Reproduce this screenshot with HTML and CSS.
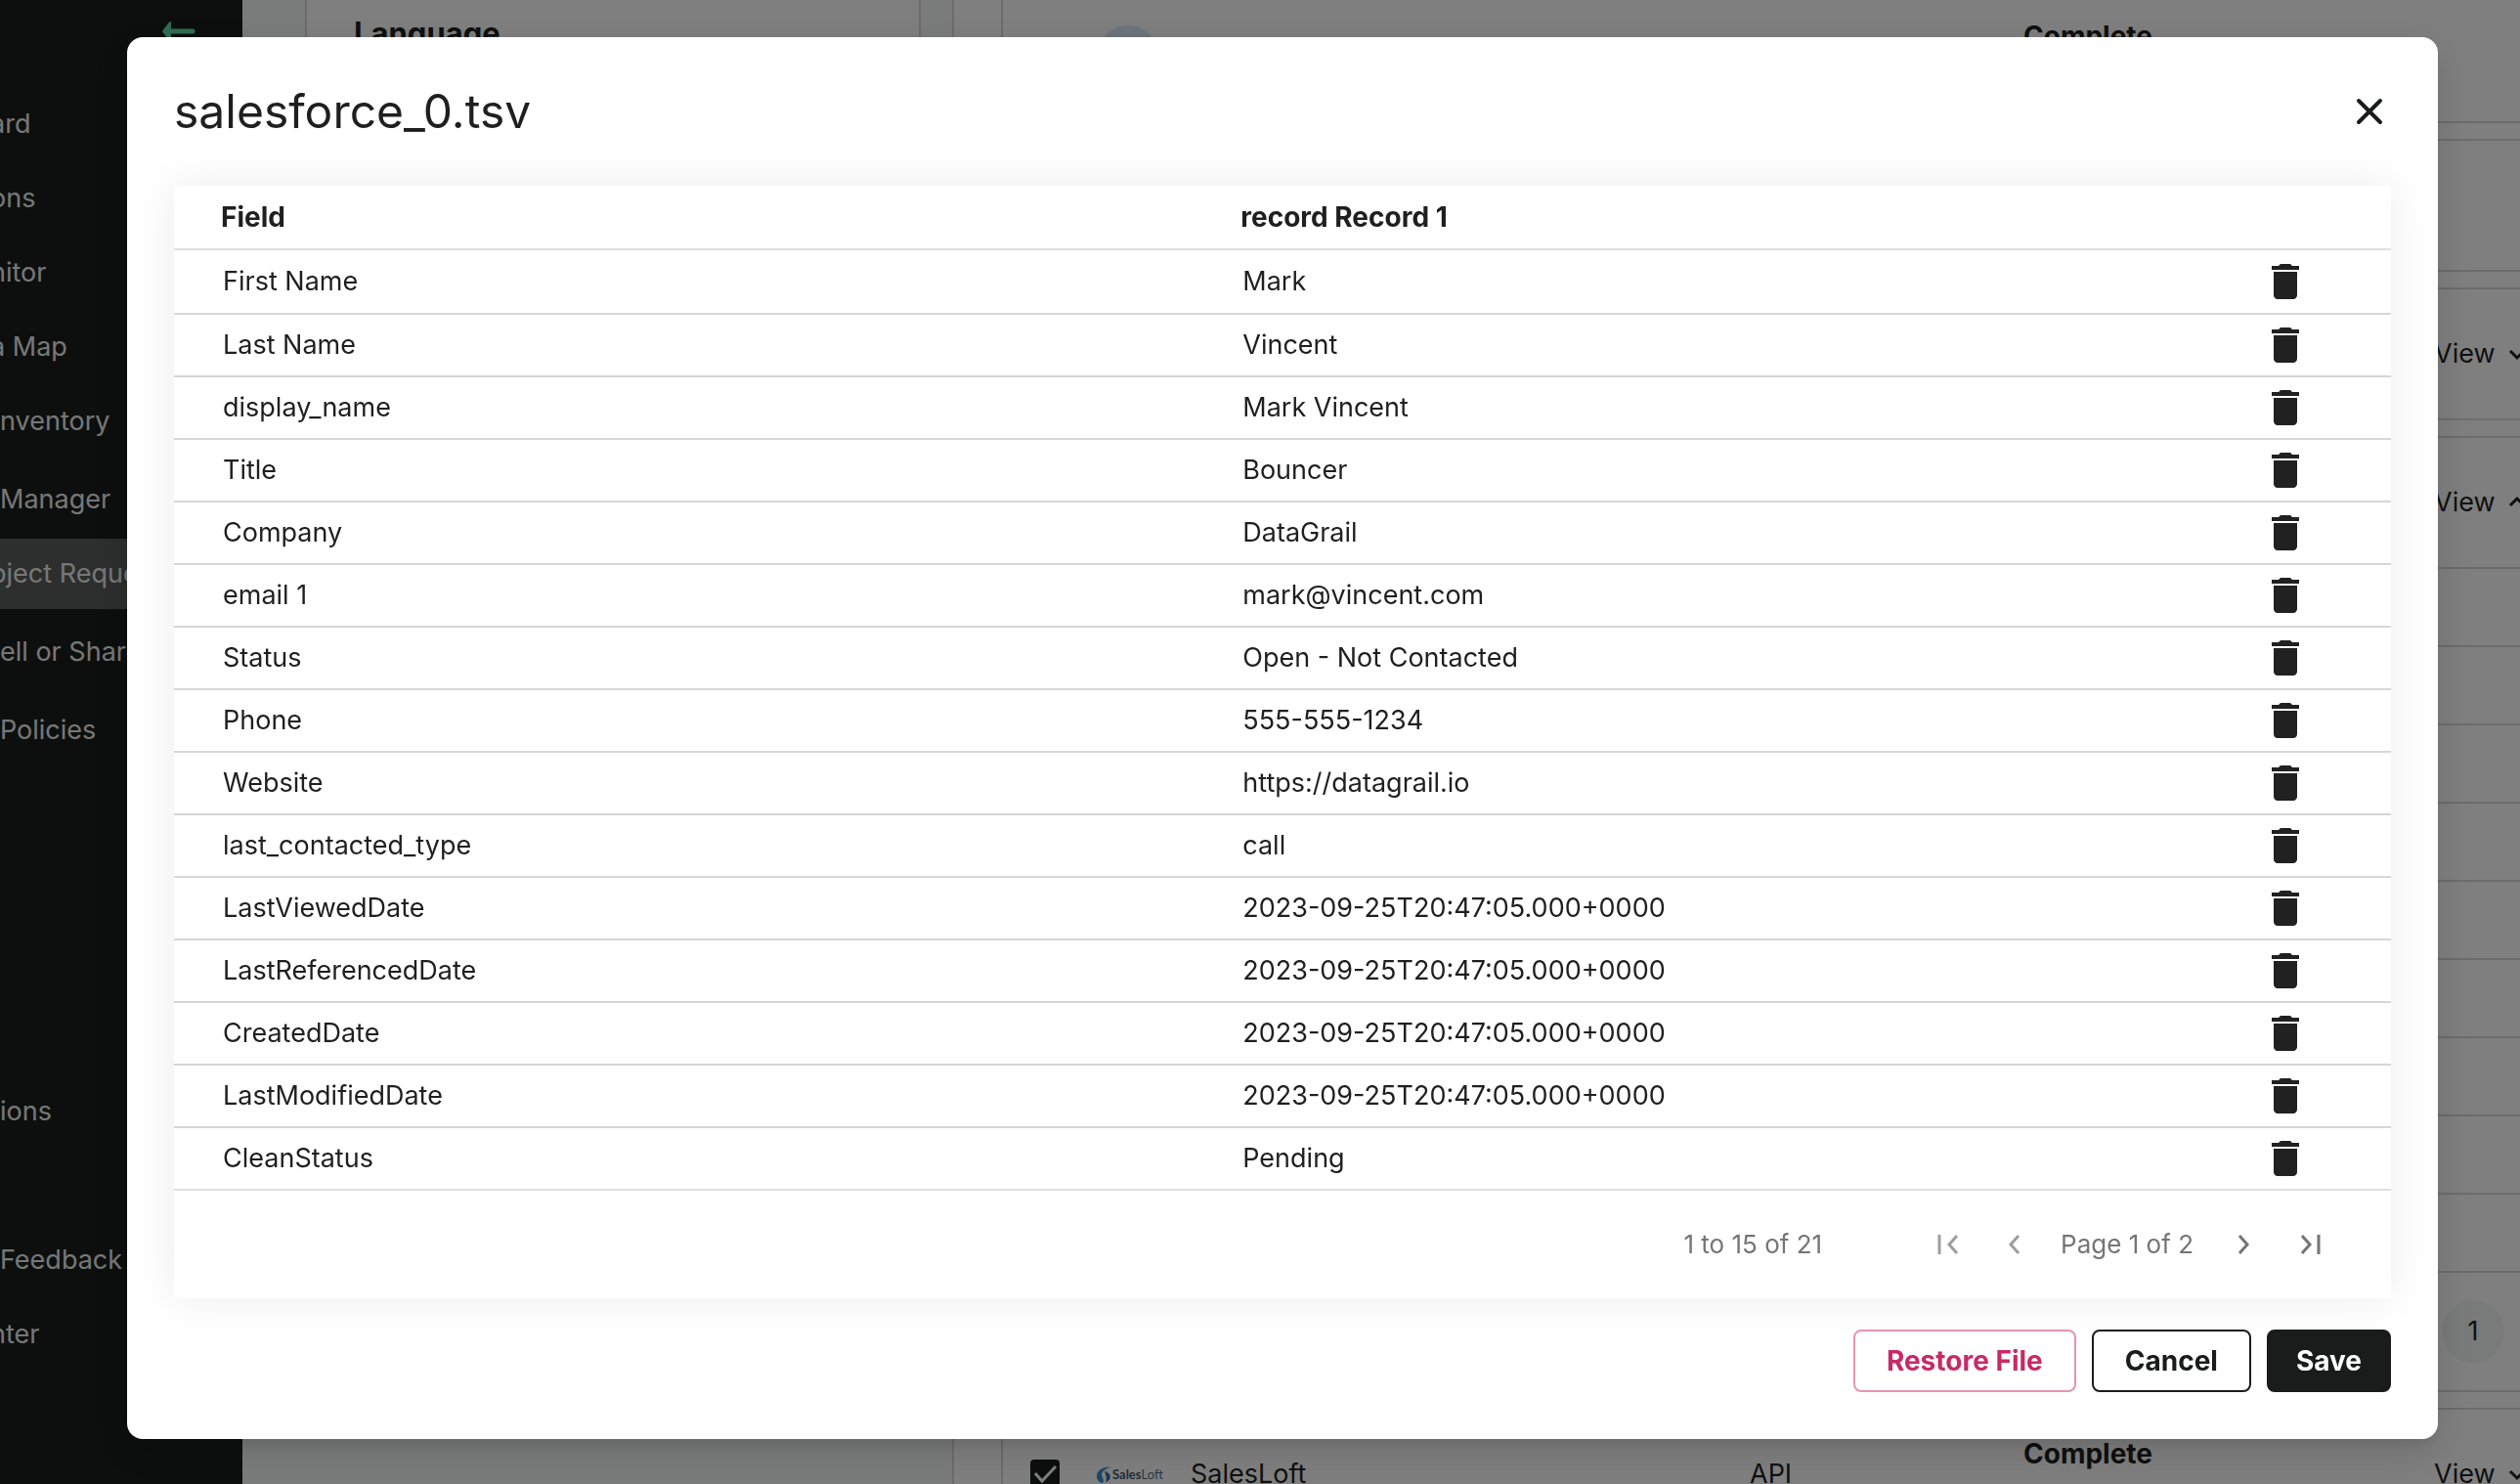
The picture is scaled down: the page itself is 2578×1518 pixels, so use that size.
FILE: index.html
```html
<!DOCTYPE html>
<html lang="en">
<head>
<meta charset="utf-8">
<title>salesforce_0.tsv</title>
<link rel="stylesheet" href="styles.css">
</head>
<body>
<div class="app">
  <nav class="sidebar" aria-label="Main">
    <button class="collapse" type="button" aria-label="Collapse menu">
      <svg width="36" height="24" viewBox="0 0 36 24"><path d="M10 3 3 12l7 9z" fill="currentColor" stroke="currentColor" stroke-width="2" stroke-linejoin="round"/><path d="M8 12h25" stroke="currentColor" stroke-width="5" stroke-linecap="round"/></svg>
    </button>
    <ul class="menu">
      <li><a class="cut" href="#">ard</a></li>
      <li><a class="cut" href="#">ons</a></li>
      <li><a class="cut" href="#">nitor</a></li>
      <li><a class="cut" href="#">a Map</a></li>
      <li><a href="#">nventory</a></li>
      <li class="apart"><a href="#">Manager</a></li>
      <li><a class="active cut" href="#">bject Requests</a></li>
      <li class="apart"><a href="#">ell or Share</a></li>
      <li class="apart"><a href="#">Policies</a></li>
    </ul>
    <ul class="menu menu-bottom">
      <li><a href="#">ions</a></li>
      <li class="empty"></li>
      <li><a href="#">Feedback</a></li>
      <li><a class="cut" href="#">nter</a></li>
    </ul>
  </nav>
  <div class="details"><section class="panel"><h2>Language</h2></section></div>
  <main class="results">
    <section class="card request"><span class="avatar"></span><span class="status">Complete</span></section>
    <section class="card request"></section>
    <section class="card request"><a class="view" href="#">View <svg width="20" height="20" viewBox="0 0 20 20"><path d="m3 7 7 7 7-7"/></svg></a></section>
    <section class="card">
      <div class="request open"><a class="view" href="#">View <svg width="20" height="20" viewBox="0 0 20 20"><path d="m3 13 7-7 7 7"/></svg></a></div>
      <div class="line"></div><div class="line"></div><div class="line"></div>
      <div class="line"></div><div class="line"></div><div class="line"></div>
      <div class="line"></div><div class="line"></div><div class="line"></div>
      <div class="pages"><span class="page">1</span></div>
    </section>
    <section class="card request">
      <input class="tick" type="checkbox" checked aria-label="Select SalesLoft">
      <span class="logo"><svg width="15" height="17" viewBox="0 0 15 17"><path d="M14 1C7 0 0 4 0 10c0 4 3 7 6 7 2-3 0-5-1-8 0-4 4-7 9-8z" fill="#3f8fd0"/><path d="M9 4c-2 4 3 6 0 12 5-1 6-7 3-9C10 6 9 5 9 4z" fill="#2a6fb0"/></svg><span><b>Sales</b>Loft</span></span>
      <span class="name">SalesLoft</span>
      <span class="kind">API</span>
      <span class="status">Complete</span>
      <a class="view" href="#">View <svg width="20" height="20" viewBox="0 0 20 20"><path d="m3 7 7 7 7-7"/></svg></a>
    </section>
  </main>
</div>

<div class="backdrop">
  <div class="modal" role="dialog" aria-modal="true" aria-labelledby="file-name">
    <header class="modal-head">
      <h1 id="file-name">salesforce_0.tsv</h1>
      <button class="close" type="button" aria-label="Close"><svg width="32" height="32" viewBox="0 0 32 32"><path d="m5 5 22 22M27 5 5 27"/></svg></button>
    </header>
    <div class="sheet">
      <table>
        <thead><tr><th class="field" scope="col">Field</th><th scope="col">record Record 1</th><th class="action"></th></tr></thead>
        <tbody id="rows"></tbody>
      </table>
      <div class="pager">
        <span class="range">1 to 15 of 21</span>
        <button type="button" disabled aria-label="First page"><svg width="24" height="24" viewBox="0 0 24 24"><path d="M4 2v20M22 3l-8 9 8 9"/></svg></button>
        <button type="button" disabled aria-label="Previous page"><svg width="24" height="24" viewBox="0 0 24 24"><path d="m17 3-8 9 8 9"/></svg></button>
        <span class="current">Page 1 of 2</span>
        <button type="button" aria-label="Next page"><svg width="24" height="24" viewBox="0 0 24 24"><path d="m7 3 8 9-8 9"/></svg></button>
        <button type="button" aria-label="Last page"><svg width="24" height="24" viewBox="0 0 24 24"><path d="m3 3 8 9-8 9M20 2v20"/></svg></button>
      </div>
    </div>
    <footer class="actions">
      <button class="btn restore" type="button">Restore File</button>
      <button class="btn cancel" type="button">Cancel</button>
      <button class="btn save" type="button">Save</button>
    </footer>
  </div>
</div>
<script src="rows.js"></script>
</body>
</html>
```
FILE: styles.css
```css
* { box-sizing: border-box; }

body {
  margin: 0;
  height: 100vh;
  overflow: hidden;
  font: 400 27px/36px Inter, "Liberation Sans", sans-serif;
  color: #1f1f1f;
}

button { font: inherit; cursor: pointer; }
a { color: inherit; text-decoration: none; }

/* Page behind the dialog */
.app { display: flex; height: 100vh; overflow: hidden; background: #f4f9f7; }

.sidebar {
  flex: none;
  width: 248px;
  display: flex;
  flex-direction: column;
  padding: 20px 0 117px;
  background: #181e1b;
  color: #eee;
}
.collapse {
  align-self: flex-end;
  display: flex;
  margin: 0 48px 47px 0;
  padding: 0;
  border: 0;
  background: none;
  color: #60dca8;
}
.menu {
  list-style: none;
  margin: 0;
  padding: 0;
  display: flex;
  flex-direction: column;
  gap: 4px;
}
.menu a { display: block; line-height: 72px; white-space: nowrap; overflow: hidden; }
.menu .cut { text-indent: -10px; }
.menu .active { background: #5a5d5c; }
.menu .apart { margin-top: 4px; }
.menu .empty { height: 72px; }
.menu-bottom { margin-top: auto; }

.details { flex: none; width: 726px; padding: 0 32px 96px 64px; }
.panel { height: 100%; padding: 14px 48px; background: #fff; border: 2px solid #d8d8d8; border-width: 0 2px; }
.panel h2 { margin: 0; font-size: 31px; line-height: 40px; }

.results {
  flex: 1;
  margin-right: -96px;
  padding-left: 48px;
  background: #fff;
  border-left: 2px solid #d8d8d8;
  display: flex;
  flex-direction: column;
  gap: 16px;
}
.card { flex: none; border: 2px solid #d8d8d8; border-radius: 12px; }
.results .card:first-child { margin-top: -10px; }
.request {
  display: grid;
  grid-template-columns: 68px 96px 572px 280px 420px 1fr;
  align-items: center;
  height: 136px;
  padding-left: 28px;
}
.open { height: 134px; border-bottom: 2px solid #d8d8d8; }
.avatar { grid-column: 2; width: 64px; height: 64px; border-radius: 50%; background: #dde8f8; }
.tick {
  appearance: none;
  width: 30px;
  height: 30px;
  margin: 0;
  border-radius: 4px;
  background: #181e1b url("data:image/svg+xml,%3Csvg xmlns='http://www.w3.org/2000/svg' viewBox='0 0 30 30'%3E%3Cpath d='m5 14 7 8L26 7' fill='none' stroke='%23fff' stroke-width='3'/%3E%3C/svg%3E");
}
.logo { grid-column: 2; display: flex; align-items: center; gap: 1px; font: 13px/20px Lato, sans-serif; color: #5a6f85; }
.logo b { color: #455a70; }
.name { grid-column: 3; }
.kind { grid-column: 4; }
.status { grid-column: 5; font-size: 28px; font-weight: 700; padding-bottom: 42px; }
.view { grid-column: 6; display: flex; align-items: center; gap: 12px; }
.view svg { fill: none; stroke: currentColor; stroke-width: 3; }
.line { height: 80px; border-bottom: 2px solid #d8d8d8; }
.pages { height: 120px; display: flex; align-items: center; justify-content: flex-end; padding-right: 110px; }
.page { width: 64px; height: 64px; border-radius: 50%; background: #f0f6f3; display: grid; place-items: center; }

/* Dialog */
.backdrop {
  position: fixed;
  inset: 0;
  display: flex;
  align-items: flex-start;
  padding: 38px 84px 46px 130px;
  background: rgba(0, 0, 0, .5);
}
.modal {
  flex: 1;
  padding: 48px;
  background: #fff;
  border-radius: 16px;
  box-shadow: 0 11px 15px -7px rgba(0, 0, 0, .1), 0 12px 38px 3px rgba(0, 0, 0, .12);
}
.modal-head { display: flex; justify-content: space-between; align-items: center; height: 56px; margin-bottom: 48px; }
.modal-head h1 { margin: 0; font-size: 48px; line-height: 56px; font-weight: 400; }
.close { display: flex; padding: 0; margin-right: 6px; border: 0; background: none; color: #1a1c1b; }
.close svg { fill: none; stroke: currentColor; stroke-width: 4; stroke-linecap: round; }

.sheet { background: #fff; box-shadow: 0 0 40px rgba(0, 0, 0, .08); }
table { width: 100%; border-spacing: 0; table-layout: fixed; }
th, td { height: 64px; padding: 0 0 0 50px; text-align: left; border-bottom: 2px solid #d6d6d6; }
th { height: 66px; padding-left: 48px; font-size: 28px; font-weight: 700; border-color: #e0e0e0; }
tbody tr:first-child td { height: 66px; }
tbody tr:last-child td { border-color: #e0e0e0; }
.field { width: 46%; }
.action { width: 240px; padding: 0 84px 0 0; }
.delete { display: block; margin-left: auto; padding: 0; border: 0; background: none; width: 48px; height: 48px; color: #212121; }
.delete svg { display: block; fill: currentColor; }

.pager { display: flex; align-items: center; justify-content: flex-end; height: 110px; padding-right: 70px; font-size: 26px; color: #757575; }
.pager button { display: flex; padding: 0; border: 0; background: none; color: inherit; margin-left: 44px; }
.pager button:disabled { color: #9e9e9e; }
.pager svg { fill: none; stroke: currentColor; stroke-width: 3; }
.pager .range { margin-right: 72px; }
.pager .current { margin: 0 -4px 0 36px; }

.actions { display: flex; justify-content: flex-end; gap: 16px; padding-top: 32px; }
.btn { height: 64px; padding: 0 32px; border: 2px solid #1a1c1b; border-radius: 8px; background: #fff; color: #1a1c1b; font-size: 28px; font-weight: 700; }
.btn.restore { border-color: #e893b4; color: #c72a66; }
.btn.save { background: #1a1c1b; color: #fff; padding: 0 28px; }
```
FILE: rows.js
```js
const stamp = "2023-09-25T20:47:05.000+0000";
const record = [
  ["First Name", "Mark"],
  ["Last Name", "Vincent"],
  ["display_name", "Mark Vincent"],
  ["Title", "Bouncer"],
  ["Company", "DataGrail"],
  ["email 1", "mark@vincent.com"],
  ["Status", "Open - Not Contacted"],
  ["Phone", "555-555-1234"],
  ["Website", "https://datagrail.io"],
  ["last_contacted_type", "call"],
  ["LastViewedDate", stamp],
  ["LastReferencedDate", stamp],
  ["CreatedDate", stamp],
  ["LastModifiedDate", stamp],
  ["CleanStatus", "Pending"]
];
document.getElementById("rows").innerHTML = record.map(([field, value]) => `
  <tr><td>${field}</td><td>${value}</td><td class="action"><button class="delete" type="button" aria-label="Delete ${field}"><svg width="48" height="48" viewBox="0 0 24 24"><path d="M6 19c0 1.1.9 2 2 2h8c1.1 0 2-.9 2-2V7H6v12zM19 4h-3.5l-1-1h-5l-1 1H5v2h14V4z"/></svg></button></td></tr>`).join("");
```
